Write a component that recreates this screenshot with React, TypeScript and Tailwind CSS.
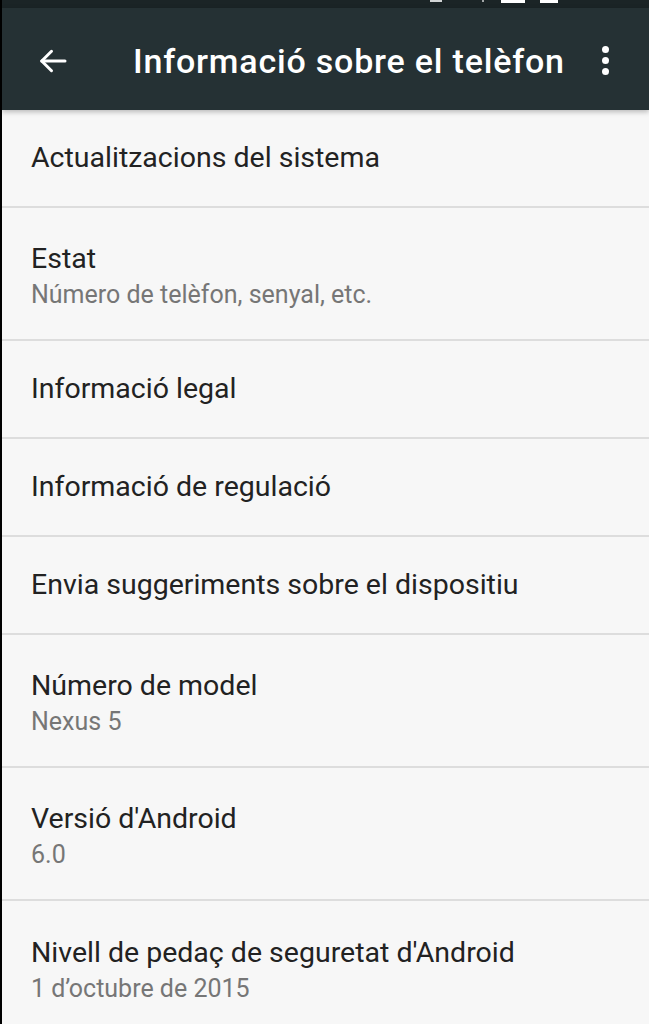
import React from 'react';

type Item = { title: string; summary?: string };

const items: Item[] = [
  { title: 'Actualitzacions del sistema' },
  { title: 'Estat', summary: 'Número de telèfon, senyal, etc.' },
  { title: 'Informació legal' },
  { title: 'Informació de regulació' },
  { title: 'Envia suggeriments sobre el dispositiu' },
  { title: 'Número de model', summary: 'Nexus 5' },
  { title: "Versió d'Android", summary: '6.0' },
  { title: "Nivell de pedaç de seguretat d'Android", summary: '1 d’octubre de 2015' },
];

const App: React.FC = () => {
  return (
    <div className="flex h-[1024px] w-[649px] overflow-hidden bg-black font-['Roboto',sans-serif]">
      <div className="w-[2px] shrink-0 bg-black" />
      <div className="flex flex-1 flex-col bg-[#f7f7f7]">
        {/* status bar, cut off at the top */}
        <div className="relative h-[8px] shrink-0 bg-[#1b2426]">
          <div className="absolute left-[428px] top-0 h-[2px] w-[12px] bg-white/80" />
          <div className="absolute left-[480px] top-0 h-[2px] w-[2px] bg-white/60" />
          <div className="absolute left-[499px] top-0 h-[3px] w-[24px] bg-white" />
          <div className="absolute left-[538px] top-0 h-[3px] w-[18px] bg-white" />
        </div>

        {/* toolbar */}
        <div className="relative z-10 flex h-[102px] shrink-0 items-center bg-[#253134] pt-[3px] shadow-[0_2px_5px_rgba(0,0,0,0.25)]">
          <div className="flex w-[131px] items-center pl-[33px]">
            <svg width="36" height="36" viewBox="0 0 24 24" fill="none" stroke="white" strokeWidth="2" strokeLinecap="round" strokeLinejoin="round">
              <path d="M20 12H4.5" />
              <path d="M11 5.5 4.5 12l6.5 6.5" />
            </svg>
          </div>
          <div className="flex-1 text-[34px] font-medium leading-none tracking-[0.8px] text-white">
            Informació sobre el telèfon
          </div>
          <div className="flex w-[80px] flex-col items-center justify-center gap-[4px] pr-[7px]">
            <div className="h-[7px] w-[7px] rounded-full bg-white" />
            <div className="h-[7px] w-[7px] rounded-full bg-white" />
            <div className="h-[7px] w-[7px] rounded-full bg-white" />
          </div>
        </div>

        {/* list */}
        <div className="flex shrink-0 flex-col">
          {items.map((item, i) => (
            <div
              key={i}
              className={`flex shrink-0 flex-col justify-center pl-[29px] ${item.summary ? 'h-[133px] pt-[6px]' : 'h-[98px]'} ${i < items.length - 1 ? 'border-b-2 border-[#dddddd]' : ''}`}
            >
              <div className="text-[28.5px] leading-[36px] text-[#222222]">{item.title}</div>
              {item.summary && (
                <div className="text-[25px] leading-[36px] text-[#767676]">{item.summary}</div>
              )}
            </div>
          ))}
        </div>
      </div>
    </div>
  );
};

export default App;
